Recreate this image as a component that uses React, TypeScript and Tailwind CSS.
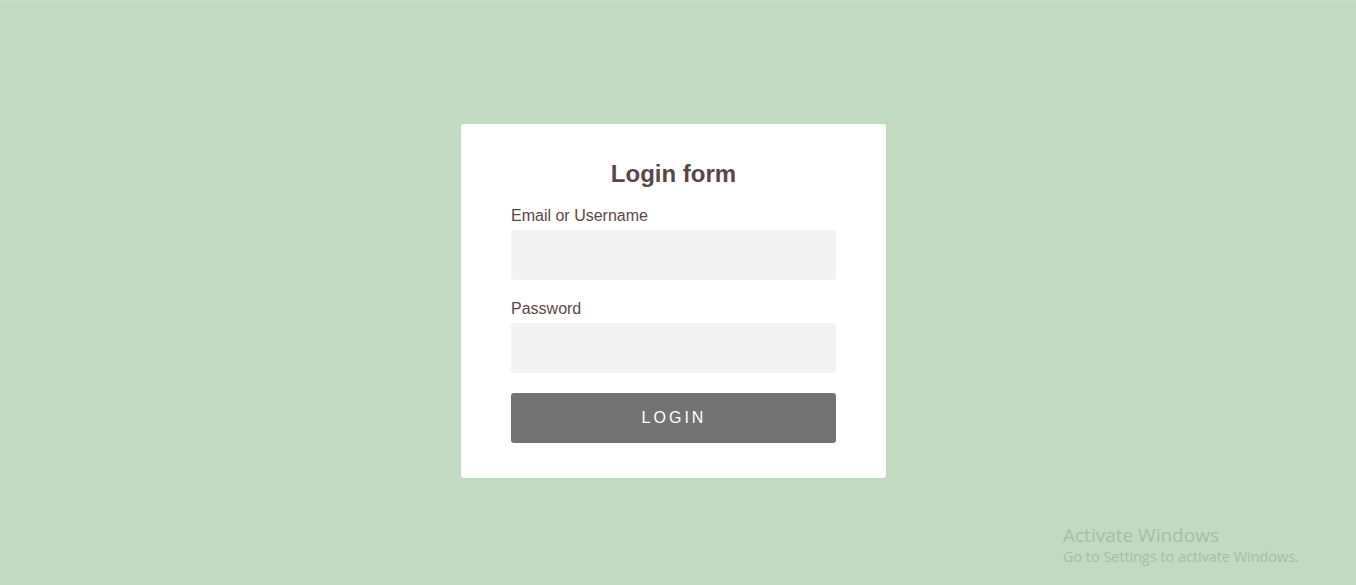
export default function App() {
  return (
    <div className="relative min-h-[585px] bg-[#c2d9c2] border-t border-[#d3d3d3] font-['Liberation_Sans',Arial,sans-serif]">
      <div className="flex pt-[123px] pl-[461px]">
        <form
          className="w-[425px] bg-white rounded-[3px] px-[50px] pt-[32px] pb-[35px]"
          onSubmit={(e) => e.preventDefault()}
        >
          <h1 className="text-center text-[24px] leading-[35px] font-bold text-[#594848]">Login form</h1>
          <label className="mt-[15px] block text-[16px] leading-[20px] text-[#5c4747]">Email or Username</label>
          <input type="text" className="mt-[4px] block w-full h-[50px] bg-[#f3f3f3] rounded-[3px] outline-none px-3" />
          <label className="mt-[19px] block text-[16px] leading-[20px] text-[#5c4747]">Password</label>
          <input type="password" className="mt-[4px] block w-full h-[50px] bg-[#f3f3f3] rounded-[3px] outline-none px-3" />
          <button
            type="submit"
            className="mt-[20px] block w-full h-[50px] bg-[#737373] rounded-[3px] text-white text-[16px] tracking-[3px] pl-[1px]"
          >
            LOGIN
          </button>
        </form>
      </div>
      <div className="absolute left-[1063px] top-[521px] text-[#a8bea8] font-['Open_Sans','Noto_Sans',sans-serif]">
        <div className="text-[19px] leading-[26px]">Activate Windows</div>
        <div className="text-[14.4px] leading-[18px]">Go to Settings to activate Windows.</div>
      </div>
    </div>
  );
}
